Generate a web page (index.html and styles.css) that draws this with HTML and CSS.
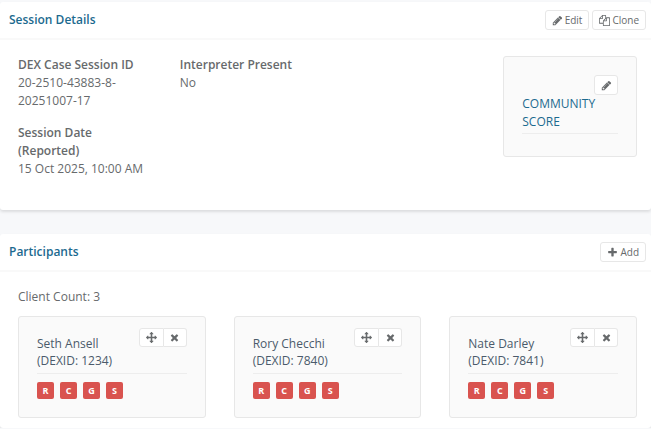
FILE: index.html
```html
<!DOCTYPE html>
<html lang="en">
<head>
    <meta charset="UTF-8">
    <meta name="viewport" content="width=device-width, initial-scale=1">
    <title>Session Details</title>
    <link rel="stylesheet" href="styles.css">
</head>
<body>
    <svg class="sprite" aria-hidden="true">
        <symbol id="i-pencil" viewBox="0 0 1792 1792"><path d="M491 1536l91-91-235-235-91 91v107h128v128h107zm523-928q0-22-22-22-10 0-17 7l-542 542q-7 7-7 17 0 22 22 22 10 0 17-7l542-542q7-7 7-17zm-54-192l416 416-832 832h-416v-416zm683 96q0 53-37 90l-166 166-416-416 166-165q36-38 90-38 53 0 91 38l235 234q37 39 37 91z"/></symbol>
        <symbol id="i-copy" viewBox="0 0 1792 1792"><path d="M1696 384q40 0 68 28t28 68v1216q0 40-28 68t-68 28h-960q-40 0-68-28t-28-68v-288h-544q-40 0-68-28t-28-68v-672q0-40 20-88t48-76l408-408q28-28 76-48t88-20h416q40 0 68 28t28 68v328q68-40 128-40h416zm-544 213l-299 299h299v-299zm-640-384l-299 299h299v-299zm196 647l316-316v-416h-384v416q0 40-28 68t-68 28h-416v640h512v-256q0-40 20-88t48-76zm956 804v-1152h-384v416q0 40-28 68t-68 28h-416v640h896z"/></symbol>
        <symbol id="i-plus" viewBox="0 0 1792 1792"><path d="M1600 736v192q0 40-28 68t-68 28h-416v416q0 40-28 68t-68 28h-192q-40 0-68-28t-28-68v-416h-416q-40 0-68-28t-28-68v-192q0-40 28-68t68-28h416v-416q0-40 28-68t68-28h192q40 0 68 28t28 68v416h416q40 0 68 28t28 68z"/></symbol>
        <symbol id="i-times" viewBox="0 0 1792 1792"><path d="M1490 1322q0 40-28 68l-136 136q-28 28-68 28t-68-28l-294-294-294 294q-28 28-68 28t-68-28l-136-136q-28-28-28-68t28-68l294-294-294-294q-28-28-28-68t28-68l136-136q28-28 68-28t68 28l294 294 294-294q28-28 68-28t68 28l136 136q28 28 28 68t-28 68l-294 294 294 294q28 28 28 68z"/></symbol>
        <symbol id="i-arrows" viewBox="0 0 1792 1792"><path d="M1792 896q0 26-19 45l-256 256q-19 19-45 19t-45-19-19-45v-128h-384v384h128q26 0 45 19t19 45-19 45l-256 256q-19 19-45 19t-45-19l-256-256q-19-19-19-45t19-45 45-19h128v-384h-384v128q0 26-19 45t-45 19-45-19l-256-256q-19-19-19-45t19-45l256-256q19-19 45-19t45 19 19 45v128h384v-384h-128q-26 0-45-19t-19-45 19-45l256-256q19-19 45-19t45 19l256 256q19 19 19 45t-19 45-45 19h-128v384h384v-128q0-26 19-45t45-19 45 19l256 256q19 19 19 45z"/></symbol>
    </svg>

    <section class="panel">
        <header class="panel-head">
            <h2>Session Details</h2>
            <div class="actions">
                <button type="button" class="btn"><svg class="icon"><use href="#i-pencil"/></svg>Edit</button>
                <button type="button" class="btn"><svg class="icon"><use href="#i-copy"/></svg>Clone</button>
            </div>
        </header>
        <div class="panel-body session">
            <dl class="fields">
                <div class="field">
                    <dt>DEX Case Session ID</dt>
                    <dd>20-2510-43883-8-20251007-17</dd>
                </div>
                <div class="field">
                    <dt>Session Date (Reported)</dt>
                    <dd>15 Oct 2025, 10:00 AM</dd>
                </div>
            </dl>
            <dl class="fields">
                <div class="field">
                    <dt>Interpreter Present</dt>
                    <dd>No</dd>
                </div>
            </dl>
            <div class="card score">
                <button type="button" class="btn btn-icon" aria-label="Edit community score"><svg class="icon"><use href="#i-pencil"/></svg></button>
                <a href="#" class="card-title">COMMUNITY SCORE</a>
            </div>
        </div>
    </section>

    <section class="panel">
        <header class="panel-head">
            <h2>Participants</h2>
            <div class="actions">
                <button type="button" class="btn"><svg class="icon"><use href="#i-plus"/></svg>Add</button>
            </div>
        </header>
        <div class="panel-body">
            <p class="count">Client Count: 3</p>
            <div class="clients">
                <article class="card">
                    <div class="client-head">
                        <div class="client-name">Seth Ansell<br>(DEXID: 1234)</div>
                        <div class="btn-group">
                            <button type="button" class="btn btn-icon" aria-label="Move"><svg class="icon"><use href="#i-arrows"/></svg></button>
                            <button type="button" class="btn btn-icon" aria-label="Remove"><svg class="icon"><use href="#i-times"/></svg></button>
                        </div>
                    </div>
                    <div class="badges">
                        <a href="#" class="badge">R</a>
                        <a href="#" class="badge">C</a>
                        <a href="#" class="badge">G</a>
                        <a href="#" class="badge">S</a>
                    </div>
                </article>
                <article class="card">
                    <div class="client-head">
                        <div class="client-name">Rory Checchi<br>(DEXID: 7840)</div>
                        <div class="btn-group">
                            <button type="button" class="btn btn-icon" aria-label="Move"><svg class="icon"><use href="#i-arrows"/></svg></button>
                            <button type="button" class="btn btn-icon" aria-label="Remove"><svg class="icon"><use href="#i-times"/></svg></button>
                        </div>
                    </div>
                    <div class="badges">
                        <a href="#" class="badge">R</a>
                        <a href="#" class="badge">C</a>
                        <a href="#" class="badge">G</a>
                        <a href="#" class="badge">S</a>
                    </div>
                </article>
                <article class="card">
                    <div class="client-head">
                        <div class="client-name">Nate Darley<br>(DEXID: 7841)</div>
                        <div class="btn-group">
                            <button type="button" class="btn btn-icon" aria-label="Move"><svg class="icon"><use href="#i-arrows"/></svg></button>
                            <button type="button" class="btn btn-icon" aria-label="Remove"><svg class="icon"><use href="#i-times"/></svg></button>
                        </div>
                    </div>
                    <div class="badges">
                        <a href="#" class="badge">R</a>
                        <a href="#" class="badge">C</a>
                        <a href="#" class="badge">G</a>
                        <a href="#" class="badge">S</a>
                    </div>
                </article>
            </div>
        </div>
    </section>
</body>
</html>
```
FILE: styles.css
```css
:root {
    --bg: #f7f8fa;
    --panel: #fff;
    --text: #676a6c;
    --title: #1c6a8f;
    --name: #4b5a6b;
    --line: #e7e7e7;
    --card: #fafafa;
    --danger: #d9534f;
}
* { box-sizing: border-box; }
body {
    margin: 0;
    padding-top: 2px;
    background: var(--bg);
    color: var(--text);
    font: 12px/18px "Open Sans", "Noto Sans", sans-serif;
}
h2, p, dl, dd { margin: 0; }
a { text-decoration: none; }
.sprite { display: none; }

.panel {
    background: var(--panel);
    border-radius: 3px;
    box-shadow: 0 2px 3px #0000001c;
}
.panel + .panel { margin-top: 24px; }
.panel-head {
    display: flex; align-items: center; justify-content: space-between;
    height: 36px;
    padding: 0 5px 0 9px;
}
.panel-head h2 {
    font-size: 12px; font-weight: 600;
    color: var(--title);
}
.panel-body {
    padding: 16px 14px 10px 18px;
    border-top: 2px solid #f9f9f9;
}
.actions { display: flex; gap: 3px; }

.btn {
    display: inline-flex; align-items: center; justify-content: center; gap: 2px;
    height: 20px;
    padding: 0 6px;
    background: #fff;
    border: 1px solid var(--line);
    border-radius: 3px;
    color: var(--text);
    font: inherit; font-size: 10px;
    cursor: pointer;
}
.btn:hover { background: #f4f4f4; }
.btn-icon { width: 24px; height: 19px; padding: 0; }
.icon { width: 11px; height: 11px; fill: currentColor; }
.btn-group { display: flex; }
.btn-group .btn:first-child { width: 25px; border-radius: 3px 0 0 3px; }
.btn-group .btn:last-child { width: 23px; border-left: 0; border-radius: 0 3px 3px 0; }

.session {
    display: grid; grid-template-columns: repeat(4, 1fr); gap: 28px;
    align-items: start;
    padding-bottom: 32px;
}
.fields { display: grid; gap: 14px; }
.fields dt { font-weight: 600; }
.card {
    background: var(--card);
    border: 1px solid var(--line);
    border-radius: 3px;
    padding: 18px;
}
.score {
    grid-column: 4;
    display: flex; flex-direction: column;
    min-height: 101px;
}
.score .btn { align-self: flex-end; height: 20px; }
.card-title {
    padding-bottom: 2px;
    border-bottom: 1px solid #ededed;
    color: var(--title);
}

.count { margin-bottom: 10px; }
.clients { display: grid; grid-template-columns: repeat(3, 1fr); gap: 28px; }
.client-head {
    display: flex; justify-content: space-between; align-items: flex-start;
    padding-bottom: 4px;
    border-bottom: 1px solid #ededed;
    color: var(--name);
    line-height: 17px;
}
.client-name { white-space: nowrap; }
.client-head .btn-group { margin-top: -7px; }
.badges { display: flex; gap: 6px; padding-top: 8px; }
.badge {
    width: 17px;
    border-radius: 2px;
    background: var(--danger);
    color: #fff;
    font-size: 9px; font-weight: 700; line-height: 17px;
    text-align: center;
}
```
